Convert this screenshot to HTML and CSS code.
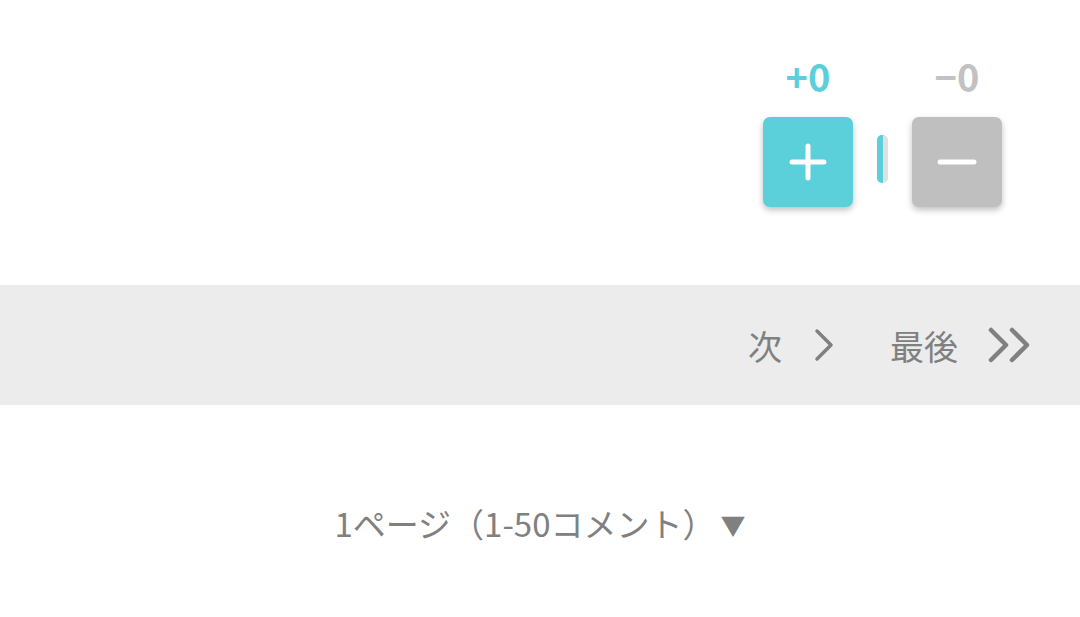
FILE: index.html
```html
<!DOCTYPE html>
<html lang="ja">

<head>
    <meta charset="UTF-8">
    <title>コメント</title>
    <link rel="stylesheet" href="styles.css">
</head>

<body>
    <div class="vote">
        <div class="vote-grid">
            <span class="count plus">+0</span>
            <span></span>
            <span class="count minus">−0</span>
            <button class="btn btn-plus">
                <svg width="40" height="40" viewBox="0 0 40 40">
                    <path d="M4 20H36M20 4V36" stroke="#fff" stroke-width="5" stroke-linecap="round" />
                </svg>
            </button>
            <span class="ratio"><span class="ratio-good"></span></span>
            <button class="btn btn-minus">
                <svg width="40" height="40" viewBox="0 0 40 40">
                    <path d="M3 20H37" stroke="#fff" stroke-width="5" stroke-linecap="round" />
                </svg>
            </button>
        </div>
    </div>

    <div class="pager">
        <a class="pager-link">次
            <svg class="chev" width="20" height="34" viewBox="0 0 20 34">
                <path d="M3 3L17 17L3 31" fill="none" stroke="#808080" stroke-width="3.5" stroke-linecap="round" stroke-linejoin="round" />
            </svg>
        </a>
        <a class="pager-link">最後
            <svg class="chev" width="46" height="36" viewBox="0 0 46 36">
                <path d="M3 3L18 18L3 33M24 3L39 18L24 33" fill="none" stroke="#808080" stroke-width="4.5" stroke-linecap="round" stroke-linejoin="round" />
            </svg>
        </a>
    </div>

    <div class="range">1ページ（1-50コメント）<span class="tri">▼</span></div>
</body>

</html>
```

FILE: styles.css
```css
* {
    margin: 0;
    padding: 0;
    box-sizing: border-box;
}

body {
    font-family: "Noto Sans CJK JP", "Noto Sans", sans-serif;
    background: #fff;
    color: #808080;
}

/* 投票 */
.vote {
    height: 285px;
    display: flex;
    justify-content: flex-end;
    padding: 52px 78px 0 0;
}

.vote-grid {
    display: grid;
    grid-template-columns: 90px 11px 90px;
    column-gap: 24px;
    row-gap: 18px;
    align-items: center;
    justify-items: center;
    align-content: start;
}

.count {
    font-size: 38px;
    font-weight: bold;
    line-height: 47px;
}

.count.plus {
    color: #5bcfda;
}

.count.minus {
    color: #c2c2c2;
}

.btn {
    width: 90px;
    height: 90px;
    border: none;
    border-radius: 7px;
    display: flex;
    align-items: center;
    justify-content: center;
    box-shadow: 0 3px 6px rgba(0, 0, 0, 0.25);
}

.btn-plus {
    background: #5bcfda;
}

.btn-minus {
    background: #bfbfbf;
}

.ratio {
    width: 11px;
    height: 48px;
    border-radius: 5px;
    background: #e0e0e0;
    overflow: hidden;
    margin-bottom: 6px;
    display: flex;
}

.ratio-good {
    width: 6px;
    background: #5bcfda;
}

/* ページ送り */
.pager {
    height: 120px;
    background: #ececec;
    display: flex;
    justify-content: flex-end;
    align-items: center;
    gap: 56px;
    padding-right: 46px;
}

.pager-link {
    display: flex;
    align-items: center;
    gap: 32px;
    font-size: 34px;
    color: #808080;
}

.pager-link + .pager-link {
    gap: 30px;
}

.range {
    text-align: center;
    font-size: 33px;
    line-height: 46px;
    margin-top: 95px;
    color: #808080;
}

.tri {
    font-size: 25px;
    margin-left: 5px;
    vertical-align: 2px;
}
```
